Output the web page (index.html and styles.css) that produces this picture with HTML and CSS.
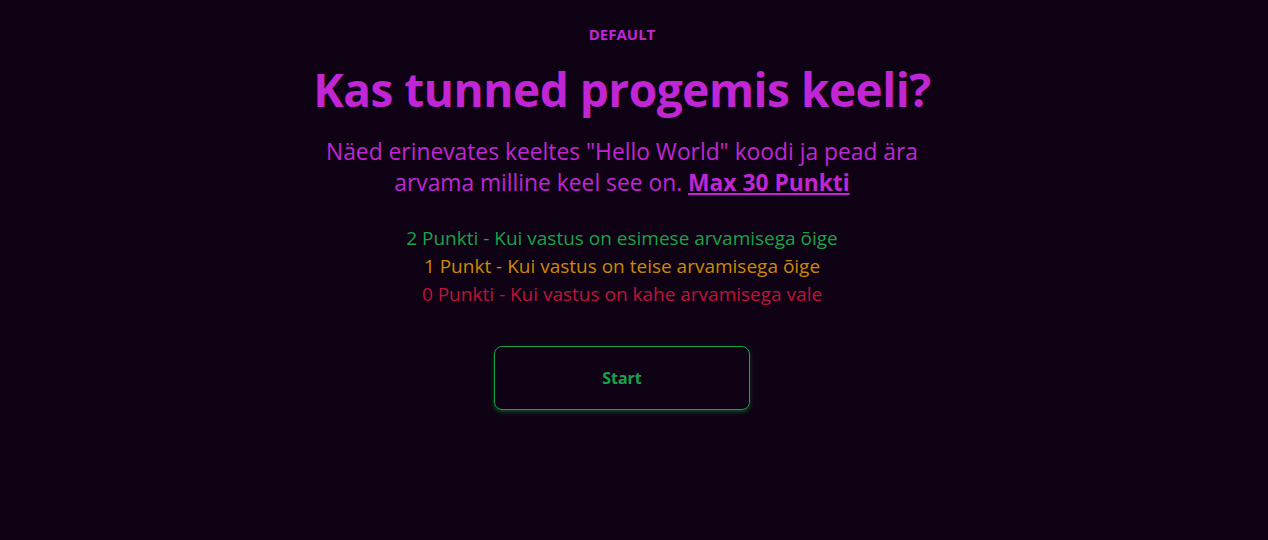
FILE: index.html
```html
<!DOCTYPE html>
<html lang="et">
<head>
<meta charset="utf-8">
<link rel="stylesheet" href="styles.css">
</head>
<body>
<main class="page">
  <div class="label">DEFAULT</div>
  <h1 class="title">Kas tunned progemis keeli?</h1>
  <p class="intro">Näed erinevates keeltes "Hello World" koodi ja pead ära arvama milline keel see on. <a class="max" href="#">Max 30 Punkti</a></p>
  <ul class="rules">
    <li class="rule good">2 Punkti - Kui vastus on esimese arvamisega õige</li>
    <li class="rule mid">1 Punkt - Kui vastus on teise arvamisega õige</li>
    <li class="rule bad">0 Punkti - Kui vastus on kahe arvamisega vale</li>
  </ul>
  <button class="start">Start</button>
</main>
</body>
</html>
```
FILE: styles.css
```css
html, body {
  margin: 0;
  padding: 0;
  background: #0f0214;
  height: 100%;
}
body {
  font-family: "Open Sans", "Noto Sans", sans-serif;
}
.page {
  display: flex;
  flex-direction: column;
  align-items: center;
  text-align: center;
  padding: 25px 24px 0 0;
}
.label {
  color: #c026d3;
  font-weight: 700;
  font-size: 15px;
  line-height: 18px;
}
.title {
  color: #c026d3;
  font-weight: 700;
  font-size: 46px;
  line-height: 56px;
  margin: 18px 0 0;
  letter-spacing: -0.5px;
}
.intro {
  color: #c026d3;
  font-size: 22.8px;
  line-height: 31px;
  margin: 19px 0 0;
  width: 600px;
}
.max {
  color: #c026d3;
  font-weight: 700;
  text-decoration: underline;
}
.rules {
  list-style: none;
  padding: 0;
  margin: 26px 0 0;
  font-size: 19px;
  line-height: 28px;
}
.good { color: #16a34a; }
.mid { color: #ca8a04; }
.bad { color: #be123c; }
.start {
  margin-top: 38px;
  width: 256px;
  height: 64px;
  background: transparent;
  border: 1px solid #16a34a;
  border-radius: 8px;
  box-shadow: 0 2px 4px rgba(22, 163, 74, 0.45);
  color: #16a34a;
  font-family: inherit;
  font-weight: 700;
  font-size: 16px;
  cursor: pointer;
}
```
